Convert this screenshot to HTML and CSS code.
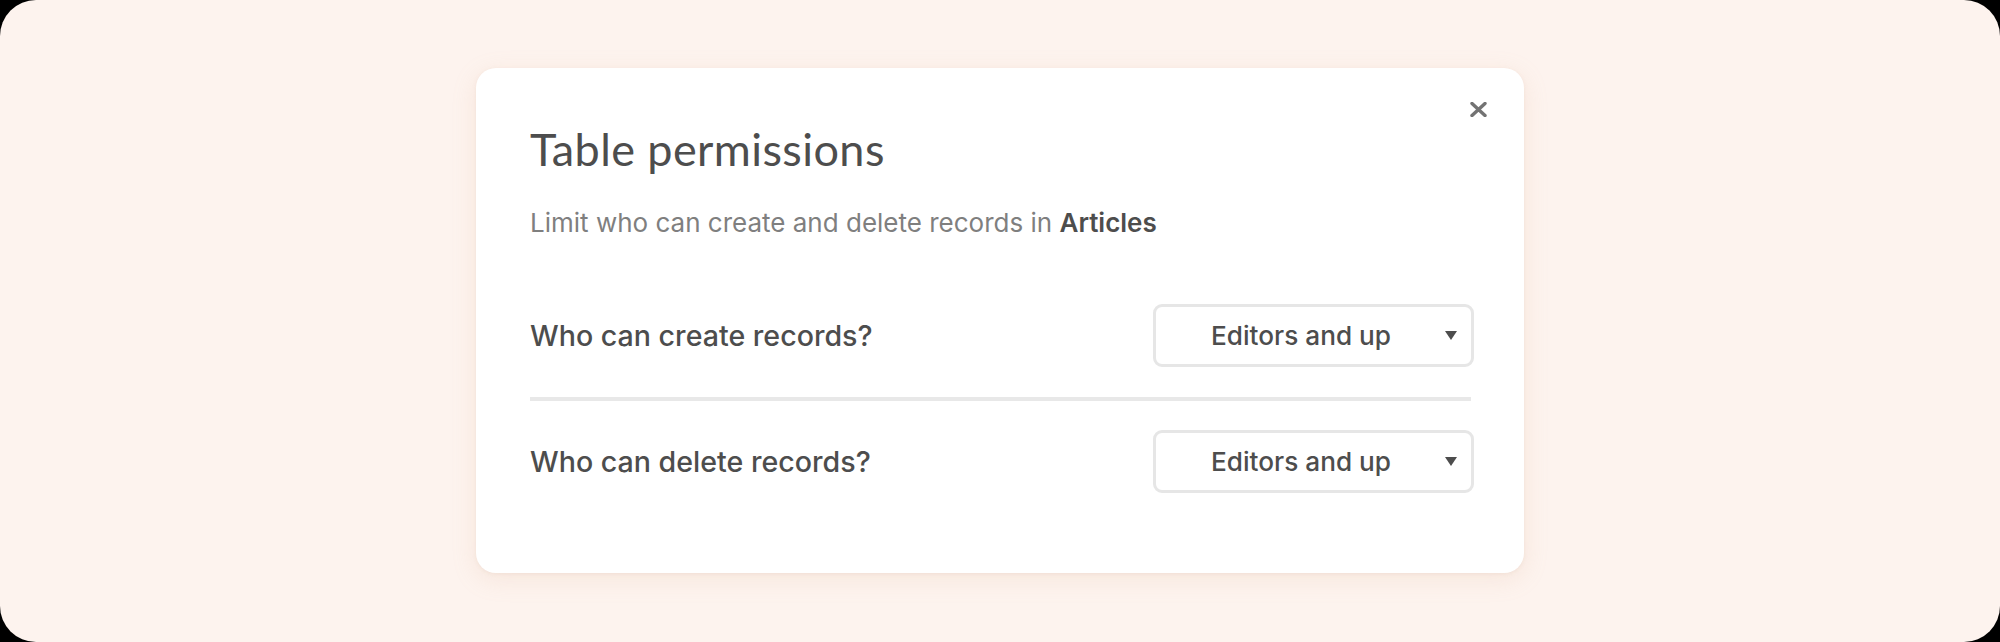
FILE: index.html
```html
<!DOCTYPE html>
<html lang="en">
<head>
<meta charset="utf-8">
<title>Table permissions</title>
<link rel="stylesheet" href="styles.css">
</head>
<body>
<div class="frame">
  <div class="card">
    <button class="close" aria-label="Close">
      <svg width="17" height="15" viewBox="0 0 17 15"><path d="M2 1.5 L15 13.5 M15 1.5 L2 13.5" stroke="#737373" stroke-width="3.4" stroke-linecap="round"/></svg>
    </button>
    <h1 class="title">Table permissions</h1>
    <p class="subtitle">Limit who can create and delete records in <strong>Articles</strong></p>
    <div class="row">
      <span class="label">Who can create records?</span>
      <div class="select"><span>Editors and up</span><span class="caret"></span></div>
    </div>
    <div class="divider"></div>
    <div class="row">
      <span class="label">Who can delete records?</span>
      <div class="select"><span>Editors and up</span><span class="caret"></span></div>
    </div>
  </div>
</div>
</body>
</html>
```

FILE: styles.css
```css
html, body {
  margin: 0;
  padding: 0;
  background: #000;
}
.frame {
  width: 2000px;
  height: 642px;
  background: #fdf3ee;
  border-radius: 36px;
  box-sizing: border-box;
  padding-top: 68px;
  display: flex;
  justify-content: center;
  align-items: flex-start;
}
.card {
  position: relative;
  width: 1048px;
  height: 505px;
  box-sizing: border-box;
  background: #fff;
  border-radius: 20px;
  box-shadow: 0 6px 24px rgba(214, 170, 140, 0.18), 0 1px 4px rgba(200, 160, 130, 0.12);
  padding: 59px 50px 0 54px;
  font-family: Inter, "Liberation Sans", sans-serif;
  color: #4d4d4d;
}
.close {
  position: absolute;
  top: 34px;
  right: 37px;
  width: 17px;
  height: 15px;
  padding: 0;
  border: 0;
  background: none;
  display: block;
}
.close svg { display: block; }
.title {
  margin: 0;
  font-family: Lato, "Open Sans", sans-serif;
  font-weight: 400;
  font-size: 45px;
  line-height: 45px;
  color: #4d4d4d;
  letter-spacing: 0.4px;
}
.subtitle {
  margin: 38px 0 0;
  font-size: 26px;
  line-height: 26px;
  color: #7f7f7f;
}
.subtitle strong {
  font-weight: 600;
  color: #4d4d4d;
}
.row {
  display: flex;
  justify-content: space-between;
  align-items: center;
  height: 63px;
}
.subtitle + .row { margin-top: 68px; }
.label {
  font-size: 28.6px;
  font-weight: 500;
  color: #4d4d4d;
}
.select {
  width: 321px;
  height: 63px;
  box-sizing: border-box;
  border: 3px solid #e6e6e6;
  border-radius: 9px;
  display: flex;
  align-items: center;
  justify-content: space-between;
  padding: 0 14px 0 55px;
  font-size: 26.2px;
  font-weight: 500;
  color: #4d4d4d;
}
.caret {
  width: 0;
  height: 0;
  border-left: 6.5px solid transparent;
  border-right: 6.5px solid transparent;
  border-top: 9px solid #4d4d4d;
}
.divider {
  height: 4px;
  background: #e8e8e8;
  margin: 30px 3px 29px 0;
}
```
